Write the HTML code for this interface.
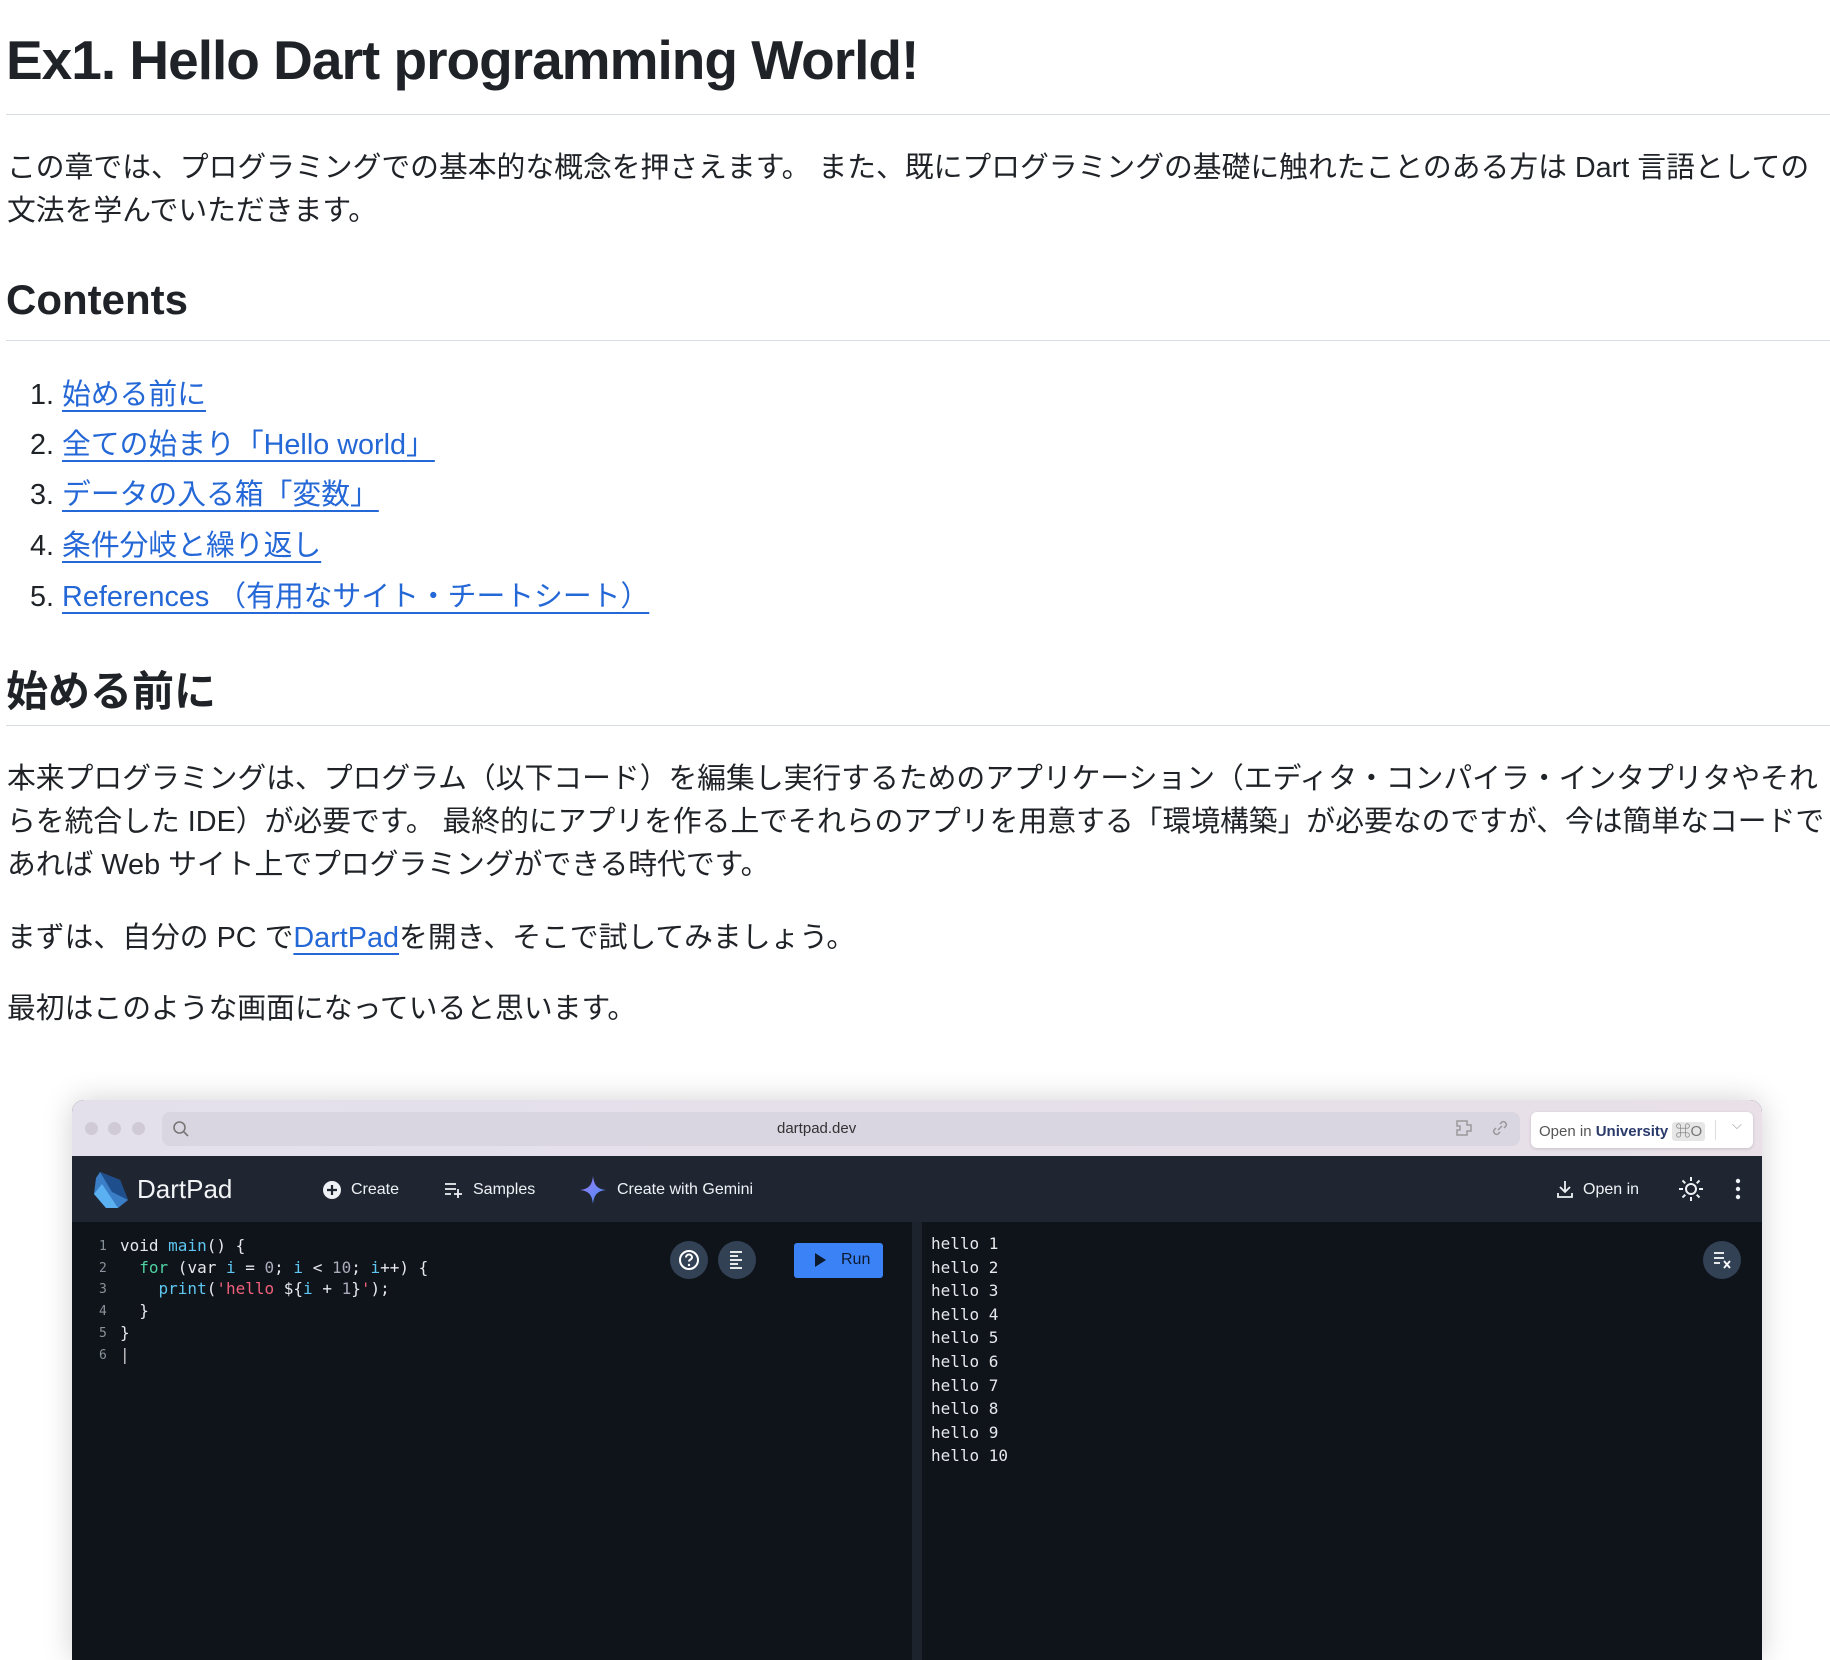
<!DOCTYPE html>
<html><head><meta charset="utf-8"><style>
*{margin:0;padding:0;box-sizing:border-box}
body{width:1830px;height:1640px;overflow:hidden;background:#fff;color:#1f2328;font-family:"Liberation Sans","Noto Sans CJK JP",sans-serif;position:relative}
.a{position:absolute;white-space:nowrap}
h1{position:absolute;left:6px;top:28px;font-size:55px;font-weight:bold;letter-spacing:-1px}
.hr{position:absolute;left:6px;width:1824px;height:1px;background:#d8dee4}
p,.li{position:absolute;left:7px;font-size:28.8px;white-space:nowrap}
h2{position:absolute;left:6px;font-size:42px;font-weight:bold}
a{color:#2467d6;text-decoration:underline;text-decoration-thickness:2px;text-underline-offset:6px}
.li{left:30px}
.win{position:absolute;left:72px;top:1100px;width:1690px;height:560px;border-radius:12px 12px 0 0;overflow:hidden;box-shadow:0 0 30px rgba(0,0,0,.18);background:#0f141b}
.tb{position:absolute;left:0;top:0;width:100%;height:56px;background:linear-gradient(90deg,#e3e0ec,#e9e0e8)}
.dot{position:absolute;top:22px;width:13px;height:13px;border-radius:50%;background:#cfcad6}
.url{position:absolute;left:90px;top:12px;width:1358px;height:34px;border-radius:8px;background:#d9d5e1}
.hd{position:absolute;left:0;top:56px;width:100%;height:66px;background:#1f2631;color:#eef1f5;font-size:16px}
.mono{font-family:"DejaVu Sans Mono","Liberation Mono",monospace;font-size:16px;color:#e6e8eb}
</style></head><body>
<h1>Ex1. Hello Dart programming World!</h1>
<div class="hr" style="top:114px"></div>
<p style="top:145px">この章では、プログラミングでの基本的な概念を押さえます。 また、既にプログラミングの基礎に触れたことのある方は Dart 言語としての</p>
<p style="top:188px">文法を学んでいただきます。</p>
<h2 style="top:276px">Contents</h2>
<div class="hr" style="top:340px"></div>
<div class="li" style="top:372px">1. <a>始める前に</a></div>
<div class="li" style="top:422px">2. <a>全ての始まり「Hello world」</a></div>
<div class="li" style="top:472px">3. <a>データの入る箱「変数」</a></div>
<div class="li" style="top:523px">4. <a>条件分岐と繰り返し</a></div>
<div class="li" style="top:574px">5. <a>References （有用なサイト・チートシート）</a></div>
<h2 style="top:658px">始める前に</h2>
<div class="hr" style="top:725px"></div>
<p style="top:756px">本来プログラミングは、プログラム（以下コード）を編集し実行するためのアプリケーション（エディタ・コンパイラ・インタプリタやそれ</p>
<p style="top:799px">らを統合した IDE）が必要です。 最終的にアプリを作る上でそれらのアプリを用意する「環境構築」が必要なのですが、今は簡単なコードで</p>
<p style="top:842px">あれば Web サイト上でプログラミングができる時代です。</p>
<p style="top:915px">まずは、自分の PC で<a>DartPad</a>を開き、そこで試してみましょう。</p>
<p style="top:986px">最初はこのような画面になっていると思います。</p>

<div class="win">
 <div class="tb">
  <div class="dot" style="left:13px"></div><div class="dot" style="left:36px"></div><div class="dot" style="left:60px"></div>
  <div class="url"></div>
  <svg class="a" style="left:100px;top:20px" width="18" height="18" viewBox="0 0 18 18"><circle cx="7.5" cy="7.5" r="5.5" fill="none" stroke="#777" stroke-width="1.6"/><path d="M11.5 11.5L16 16" stroke="#777" stroke-width="1.6"/></svg>
  <div class="a" style="left:705px;top:20px;font-size:15px;color:#333">dartpad.dev</div>
  <svg class="a" style="left:1383px;top:18px" width="22" height="20" viewBox="0 0 22 20"><path d="M2 3h10v4h4v6h-4v4H2v-5h3v-4H2z" fill="none" stroke="#999" stroke-width="1.5"/></svg>
  <svg class="a" style="left:1418px;top:18px" width="20" height="20" viewBox="0 0 20 20"><path d="M8 12l4-4M6 10l-2 2a3 3 0 004 4l2-2M14 10l2-2a3 3 0 00-4-4l-2 2" fill="none" stroke="#999" stroke-width="1.5"/></svg>
  <div class="a" style="left:1459px;top:12px;width:222px;height:36px;background:#fff;border-radius:6px;box-shadow:0 1px 3px rgba(0,0,0,.15)"></div>
  <div class="a" style="left:1467px;top:20px;font-size:15px;color:#555">Open in <b style="color:#2a3a6a">University</b> <span style="background:#e6e6e6;border-radius:3px;padding:1px 3px;color:#777">⌘O</span></div>
  <div class="a" style="left:1643px;top:20px;width:1px;height:20px;background:#ddd"></div>
  <div class="a" style="left:1660px;top:17px;font-size:13px;color:#999">⌵</div>
 </div>
 <div class="hd">
  <svg class="a" style="left:20px;top:14px" width="36" height="38" viewBox="0 0 36 38"><path d="M8 2L28 10 36 30 26 38 14 38 2 24 4 8z" fill="#3a7ec7"/><path d="M8 2L28 10 36 30 20 22z" fill="#1f4e8c"/><path d="M2 24L14 38H26L10 14z" fill="#5ab0f0"/></svg>
  <div class="a" style="left:65px;top:18px;font-size:26px;color:#f1f3f5">DartPad</div>
  <svg class="a" style="left:250px;top:24px" width="20" height="20" viewBox="0 0 20 20"><circle cx="10" cy="10" r="9" fill="#eef1f5"/><path d="M10 5v10M5 10h10" stroke="#1f2631" stroke-width="2.2"/></svg>
  <div class="a" style="left:279px;top:25px">Create</div>
  <svg class="a" style="left:372px;top:25px" width="20" height="18" viewBox="0 0 20 18"><path d="M1 3h11M1 8h11M1 13h6M14 8v9M10 13h8" stroke="#eef1f5" stroke-width="1.8"/></svg>
  <div class="a" style="left:401px;top:25px">Samples</div>
  <svg class="a" style="left:508px;top:20px" width="26" height="28" viewBox="0 0 26 28"><defs><linearGradient id="g" x1="0" y1="0" x2="1" y2="1"><stop offset="0" stop-color="#9b7cf5"/><stop offset="1" stop-color="#4a8cf7"/></linearGradient></defs><path d="M13 0C14 9 17 13 26 14 17 15 14 19 13 28 12 19 9 15 0 14 9 13 12 9 13 0z" fill="url(#g)"/></svg>
  <div class="a" style="left:545px;top:25px">Create with Gemini</div>
  <svg class="a" style="left:1484px;top:23px" width="18" height="20" viewBox="0 0 18 20"><path d="M9 2v11M4 8l5 5 5-5M2 14v4h14v-4" fill="none" stroke="#eef1f5" stroke-width="1.8"/></svg>
  <div class="a" style="left:1511px;top:25px">Open in</div>
  <svg class="a" style="left:1605px;top:19px" width="28" height="28" viewBox="0 0 28 28"><circle cx="14" cy="14" r="5" fill="none" stroke="#eef1f5" stroke-width="2"/><path d="M14 2v4M14 22v4M2 14h4M22 14h4M5.5 5.5l2.8 2.8M19.7 19.7l2.8 2.8M5.5 22.5l2.8-2.8M19.7 8.3l2.8-2.8" stroke="#eef1f5" stroke-width="2"/></svg>
  <svg class="a" style="left:1662px;top:22px" width="8" height="22" viewBox="0 0 8 22"><circle cx="4" cy="3" r="2.2" fill="#eef1f5"/><circle cx="4" cy="11" r="2.2" fill="#eef1f5"/><circle cx="4" cy="19" r="2.2" fill="#eef1f5"/></svg>
 </div>
 <div class="a" style="left:840px;top:122px;width:10px;height:440px;background:#1c232d"></div>
 <div class="a mono" style="left:27px;top:136px;line-height:21.7px;color:#8a929c;font-size:13px">1<br>2<br>3<br>4<br>5<br>6</div>
 <div class="a mono" style="left:48px;top:135px;line-height:21.7px;white-space:pre">void <span style="color:#5ec6f0">main</span>() {
  <span style="color:#4fd1a0">for</span> (var <span style="color:#5ec6f0">i</span> = <span style="color:#aab">0</span>; <span style="color:#5ec6f0">i</span> &lt; <span style="color:#aab">10</span>; <span style="color:#5ec6f0">i</span>++) {
    <span style="color:#5ec6f0">print</span>(<span style="color:#f0607a">'hello </span>${<span style="color:#5ec6f0">i</span> + <span style="color:#aab">1</span>}<span style="color:#f0607a">'</span>);
  }
}
<span style="color:#ccc">|</span></div>
 <div class="a" style="left:598px;top:141px;width:38px;height:38px;border-radius:50%;background:#334155"></div>
 <svg class="a" style="left:605px;top:148px" width="24" height="24" viewBox="0 0 24 24"><circle cx="12" cy="12" r="9" fill="none" stroke="#fff" stroke-width="2"/><path d="M9 9.5a3 3 0 116 0c0 2-3 2-3 4" fill="none" stroke="#fff" stroke-width="2"/><circle cx="12" cy="17" r="1.2" fill="#fff"/></svg>
 <div class="a" style="left:646px;top:141px;width:38px;height:38px;border-radius:50%;background:#334155"></div>
 <svg class="a" style="left:656px;top:150px" width="18" height="20" viewBox="0 0 18 20"><path d="M2 2h12M2 6h8M2 10h12M2 14h8M2 18h12" stroke="#fff" stroke-width="1.8"/></svg>
 <div class="a" style="left:722px;top:143px;width:89px;height:35px;border-radius:3px;background:#3b82f6"></div>
 <svg class="a" style="left:742px;top:153px" width="12" height="14" viewBox="0 0 12 14"><path d="M1 0L12 7 1 14z" fill="#0d1a2e"/></svg>
 <div class="a" style="left:769px;top:151px;font-size:16px;color:#0d1a2e">Run</div>
 <div class="a mono" style="left:859px;top:132px;line-height:23.6px">hello 1<br>hello 2<br>hello 3<br>hello 4<br>hello 5<br>hello 6<br>hello 7<br>hello 8<br>hello 9<br>hello 10</div>
 <div class="a" style="left:1631px;top:141px;width:38px;height:38px;border-radius:50%;background:#334155"></div>
 <svg class="a" style="left:1640px;top:150px" width="22" height="20" viewBox="0 0 22 20"><path d="M2 3h10M2 8h10M2 13h6M12 11l6 7M18 11l-6 7" stroke="#fff" stroke-width="1.8"/></svg>
</div>
</body></html>
